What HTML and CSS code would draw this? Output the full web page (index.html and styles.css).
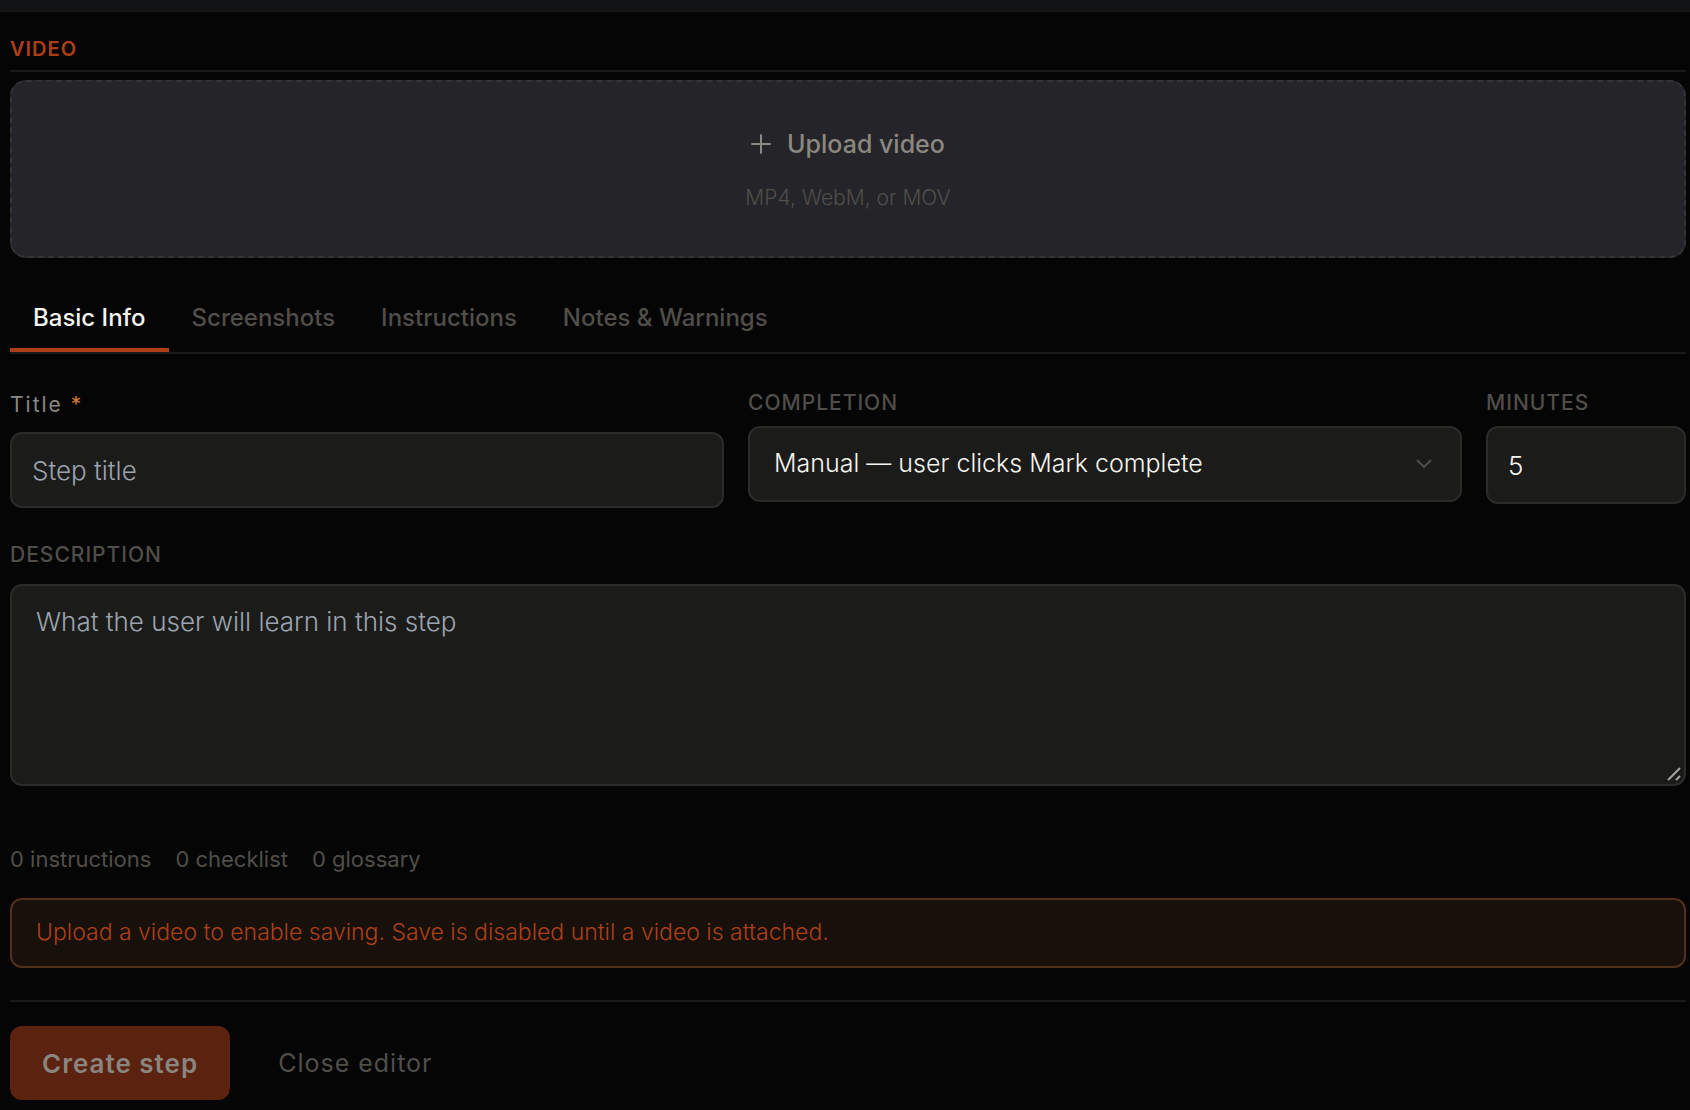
FILE: index.html
```html
<!DOCTYPE html>
<html lang="en">
<head>
  <meta charset="UTF-8" />
  <meta name="viewport" content="width=device-width, initial-scale=1.0" />
  <title>Step editor</title>
  <link rel="stylesheet" href="styles.css">
</head>
<body>
  <div class="topbar"></div>

  <form class="editor">
    <h2 class="section-title">Video</h2>
    <button type="button" class="dropzone">
      <span class="dropzone-title">
        <svg class="plus" viewBox="0 0 20 20" aria-hidden="true"><path d="M10 1v18M1 10h18" /></svg>
        Upload video
      </span>
      <span class="dropzone-hint">MP4, WebM, or MOV</span>
    </button>

    <div class="tabs" role="tablist">
      <button type="button" class="tab active" role="tab" aria-selected="true">Basic Info</button>
      <button type="button" class="tab" role="tab">Screenshots</button>
      <button type="button" class="tab" role="tab">Instructions</button>
      <button type="button" class="tab" role="tab">Notes &amp; Warnings</button>
    </div>

    <div class="fields">
      <div class="field">
        <label class="label-title" for="title">Title <span class="required">*</span></label>
        <input class="control" id="title" type="text" placeholder="Step title" />
      </div>
      <div class="field">
        <label class="label" for="completion">Completion</label>
        <div class="select-wrap">
          <select class="control select" id="completion">
            <option>Manual — user clicks Mark complete</option>
          </select>
          <svg class="chevron" viewBox="0 0 16 10" aria-hidden="true"><path d="M1 1l7 7 7-7" /></svg>
        </div>
      </div>
      <div class="field">
        <label class="label" for="minutes">Minutes</label>
        <input class="control minutes" id="minutes" type="number" value="5" />
      </div>
    </div>

    <div class="description">
      <label class="label" for="description">Description</label>
      <div class="textarea-wrap">
        <textarea class="control textarea" id="description" placeholder="What the user will learn in this step"></textarea>
        <svg class="grip" viewBox="0 0 14 14" aria-hidden="true"><path d="M1 13L13 1M9 13l4-4" /></svg>
      </div>
    </div>

    <div class="counts">
      <span>0 instructions</span>
      <span>0 checklist</span>
      <span>0 glossary</span>
    </div>

    <p class="notice">Upload a video to enable saving. Save is disabled until a video is attached.</p>

    <div class="actions">
      <button type="submit" class="btn create" disabled>Create step</button>
      <button type="button" class="btn close">Close editor</button>
    </div>
  </form>
</body>
</html>
```
FILE: styles.css
```css
* {
  box-sizing: border-box;
}
body {
  margin: 0;
  background: #050505;
  color: #f5f5f0;
  font-family: Inter, "Open Sans", sans-serif;
  font-size: 24px;
}
button, input, select, textarea {
  font-family: inherit;
  margin: 0;
}
.topbar {
  height: 12px;
  background: #111314;
  border-bottom: 2px solid #161616;
}
.editor {
  padding: 24px 4px 10px 10px;
}
.section-title {
  margin: 0 0 8px;
  padding-bottom: 8px;
  border-bottom: 2px solid #181818;
  color: #ad3f17;
  font-size: 20px;
  line-height: 26px;
  font-weight: 600;
  letter-spacing: 1px;
  text-transform: uppercase;
}
.dropzone {
  display: flex;
  flex-direction: column;
  align-items: center;
  justify-content: center;
  gap: 24px;
  width: 100%;
  height: 178px;
  padding: 2px 0 0;
  border: 2px dashed #343437;
  border-radius: 16px;
  background: #252428;
  cursor: pointer;
}
.dropzone-title {
  display: flex;
  align-items: center;
  gap: 16px;
  color: #8a8880;
  font-size: 25px;
  line-height: 32px;
  font-weight: 500;
}
.plus {
  width: 20px;
  height: 20px;
  fill: none;
  stroke: #8a8880;
  stroke-width: 2;
  stroke-linecap: round;
}
.dropzone-hint {
  color: #504f4b;
  font-size: 21px;
  line-height: 28px;
  font-weight: 300;
}
.tabs {
  display: flex;
  margin-top: 24px;
  border-bottom: 2px solid #181818;
}
.tab {
  padding: 22px 23px 16px;
  border: 0;
  border-bottom: 4px solid transparent;
  background: none;
  color: #504e4a;
  font-size: 24px;
  line-height: 28px;
  font-weight: 500;
  cursor: pointer;
}
.tab.active {
  color: #f5f5f0;
  border-bottom-color: #ad3f17;
}
.fields {
  display: grid;
  grid-template-columns: 1fr 1fr 200px;
  align-items: start;
  gap: 24px;
  margin-top: 32px;
}
.label, .label-title {
  display: block;
  margin-bottom: 6px;
  color: #504e4a;
  font-size: 21px;
  line-height: 34px;
  font-weight: 500;
  letter-spacing: 1px;
}
.label {
  text-transform: uppercase;
}
.label-title {
  margin-bottom: 10px;
  padding-top: 2px;
  color: #8a8880;
  font-weight: 400;
  letter-spacing: 2px;
}
.required {
  color: #d97b35;
}
.control {
  display: block;
  width: 100%;
  height: 76px;
  padding: 0 20px;
  border: 2px solid #2b2b29;
  border-radius: 12px;
  outline: 0;
  background: #1b1b19;
  color: #f5f5f0;
  font-size: 26px;
  font-weight: 300;
}
.control::placeholder {
  color: #9ca3af;
}
.select-wrap, .textarea-wrap {
  position: relative;
}
.select {
  padding: 0 64px 2px 24px;
  font-size: 25px;
  appearance: none;
}
.chevron {
  position: absolute;
  top: 33px;
  right: 30px;
  width: 16px;
  height: 10px;
  fill: none;
  stroke: #504e4a;
  stroke-width: 2;
  pointer-events: none;
}
.minutes {
  height: 78px;
  appearance: textfield;
}
.minutes::-webkit-inner-spin-button {
  appearance: none;
}
.description {
  margin-top: 30px;
}
.description .label {
  margin-bottom: 12px;
}
.textarea {
  height: 202px;
  padding: 18px 24px;
  line-height: 36px;
  resize: none;
}
.grip {
  position: absolute;
  right: 5px;
  bottom: 5px;
  width: 14px;
  height: 14px;
  fill: none;
  stroke: #a5a5a3;
  stroke-width: 2;
}
.counts {
  display: flex;
  gap: 24px;
  margin-top: 56px;
  color: #504e4a;
  font-size: 22px;
  line-height: 34px;
  font-weight: 400;
}
.notice {
  margin: 22px 0 32px;
  padding: 15px 24px 17px;
  border: 2px solid #54301b;
  border-radius: 12px;
  background: #17100b;
  color: #ad3f17;
  font-size: 23px;
  line-height: 34px;
  font-weight: 300;
}
.actions {
  display: flex;
  gap: 16px;
  padding-top: 24px;
  border-top: 2px solid #181818;
}
.btn {
  height: 74px;
  padding: 0 32px;
  border: 0;
  border-radius: 12px;
  background: none;
  font-size: 25px;
  letter-spacing: 1px;
  cursor: pointer;
}
.create {
  background: #5a220f;
  color: #8b8580;
  font-size: 26px;
  font-weight: 600;
}
.close {
  color: #504e4a;
  font-weight: 400;
}
```
